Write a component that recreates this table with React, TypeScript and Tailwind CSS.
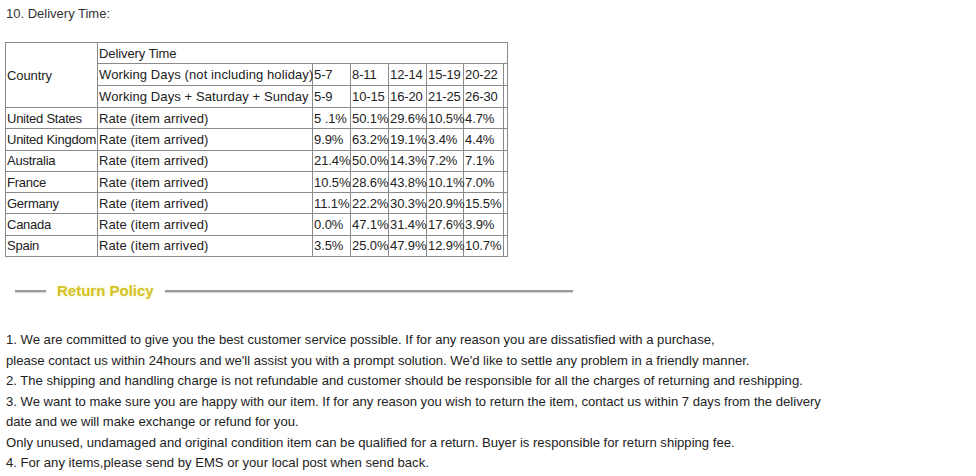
import React from 'react';

const rows: [string, string[]][] = [
  ['United States', ['5 .1%', '50.1%', '29.6%', '10.5%', '4.7%']],
  ['United Kingdom', ['9.9%', '63.2%', '19.1%', '3.4%', '4.4%']],
  ['Australia', ['21.4%', '50.0%', '14.3%', '7.2%', '7.1%']],
  ['France', ['10.5%', '28.6%', '43.8%', '10.1%', '7.0%']],
  ['Germany', ['11.1%', '22.2%', '30.3%', '20.9%', '15.5%']],
  ['Canada', ['0.0%', '47.1%', '31.4%', '17.6%', '3.9%']],
  ['Spain', ['3.5%', '25.0%', '47.9%', '12.9%', '10.7%']],
];

const cell = 'border border-[#8a8a8a] pl-[1px] pr-0 py-0 text-left align-middle whitespace-nowrap';

export default function App() {
  return (
    <div className="w-[976px] h-[476px] bg-white font-['Liberation_Sans',Arial,sans-serif] text-[13px] text-[#222] overflow-hidden">
      <p className="pt-[6px] pl-[6px] leading-[15px] text-[#333]">10. Delivery Time:</p>

      {/* Delivery table */}
      <table className="mt-[21px] ml-[5px] w-[502px] table-fixed border-collapse leading-[15px] tracking-[-0.1px]">
        <colgroup>
          <col className="w-[92px]" />
          <col className="w-[215px]" />
          <col className="w-[38px]" />
          <col className="w-[38px]" />
          <col className="w-[38px]" />
          <col className="w-[37px]" />
          <col className="w-[40px]" />
          <col className="w-[4px]" />
        </colgroup>
        <tbody>
          <tr className="h-[21px]">
            <td rowSpan={3} className={cell}>Country</td>
            <td colSpan={7} className={cell}>Delivery Time</td>
          </tr>
          <tr className="h-[22px]">
            <td className={cell + ' tracking-[0.1px]'}>Working Days (not including holiday)</td>
            <td className={cell}>5-7</td>
            <td className={cell}>8-11</td>
            <td className={cell}>12-14</td>
            <td className={cell}>15-19</td>
            <td className={cell}>20-22</td>
            <td className={cell}></td>
          </tr>
          <tr className="h-[22px]">
            <td className={cell + ' tracking-[0.1px]'}>Working Days + Saturday + Sunday</td>
            <td className={cell}>5-9</td>
            <td className={cell}>10-15</td>
            <td className={cell}>16-20</td>
            <td className={cell}>21-25</td>
            <td className={cell}>26-30</td>
            <td className={cell}></td>
          </tr>
          {rows.map(([country, vals]) => (
            <tr key={country} className="h-[21.3px]">
              <td className={cell + ' tracking-[-0.25px]'}>{country}</td>
              <td className={cell + ' tracking-[0.1px]'}>Rate (item arrived)</td>
              {vals.map((v, i) => (
                <td key={i} className={cell}>{v}</td>
              ))}
              <td className={cell}></td>
            </tr>
          ))}
        </tbody>
      </table>

      {/* Return Policy heading */}
      <div className="mt-[24px] h-[20px] flex items-center">
        <div className="ml-[15px] w-[31px] h-[2px] bg-[#9a9a9a] shadow-[0_1px_1px_#d4d4d4]"></div>
        <span className="ml-[11px] font-bold text-[15px] leading-[20px] text-[#d2c226] [text-shadow:0_0_4px_#fbf3b0]">
          Return Policy
        </span>
        <div className="ml-[11px] w-[408px] h-[2px] bg-[#9a9a9a] shadow-[0_1px_1px_#d4d4d4]"></div>
      </div>

      {/* Policy text */}
      <div className="mt-[29px] pl-[6px] text-[13.1px] leading-[20.5px] text-[#222] whitespace-nowrap">
        <p>1. We are committed to give you the best customer service possible. If for any reason you are dissatisfied with a purchase,</p>
        <p>please contact us within 24hours and we'll assist you with a prompt solution. We'd like to settle any problem in a friendly manner.</p>
        <p>2. The shipping and handling charge is not refundable and customer should be responsible for all the charges of returning and reshipping.</p>
        <p>3. We want to make sure you are happy with our item. If for any reason you wish to return the item, contact us within 7 days from the delivery</p>
        <p>date and we will make exchange or refund for you.</p>
        <p>Only unused, undamaged and original condition item can be qualified for a return. Buyer is responsible for return shipping fee.</p>
        <p>4. For any items,please send by EMS or your local post when send back.</p>
      </div>
    </div>
  );
}
